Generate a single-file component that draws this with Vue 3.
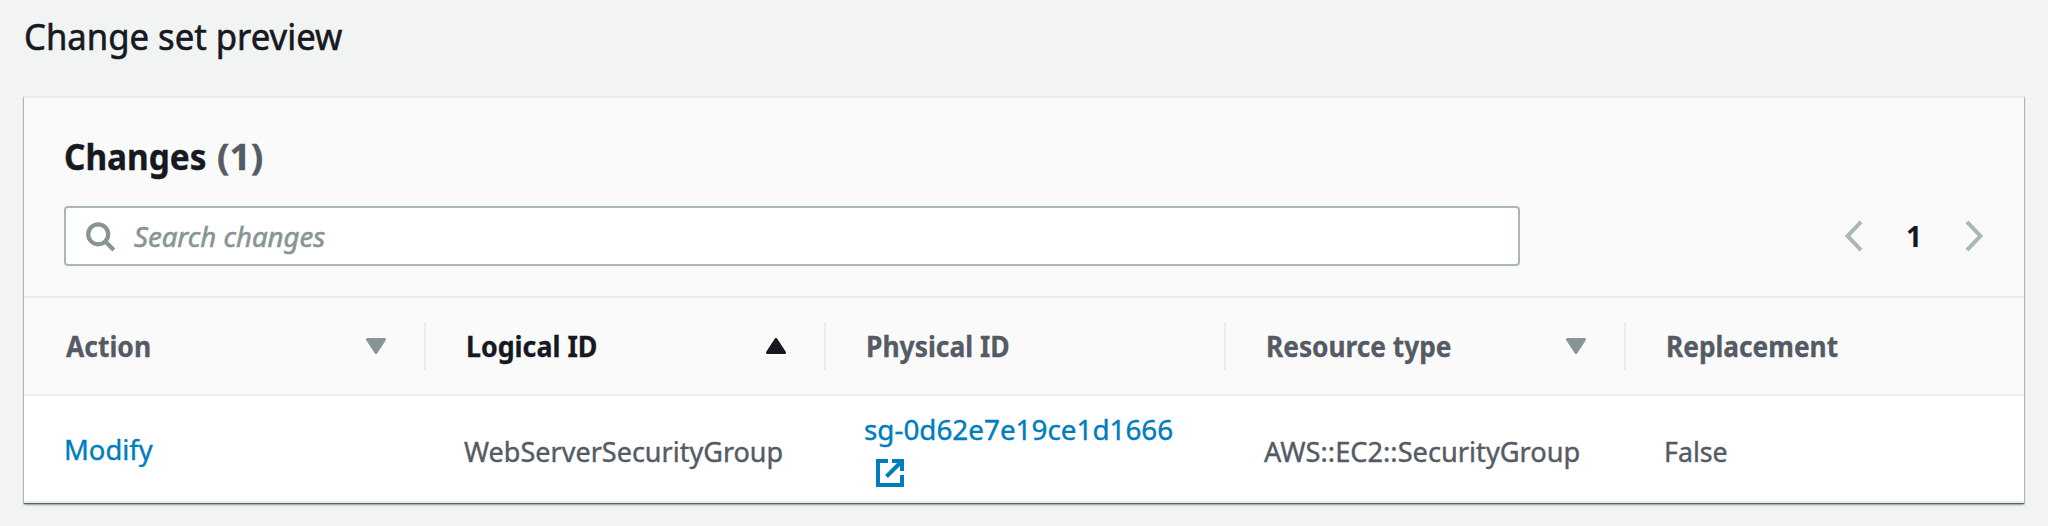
<script setup>
const columns = [
  { key: 'action', label: 'Action', sort: 'down' },
  { key: 'logical', label: 'Logical ID', sort: 'up' },
  { key: 'physical', label: 'Physical ID', sort: null },
  { key: 'type', label: 'Resource type', sort: 'down' },
  { key: 'replacement', label: 'Replacement', sort: null },
]
const changes = [
  {
    action: 'Modify',
    logical: 'WebServerSecurityGroup',
    physical: 'sg-0d62e7e19ce1d1666',
    type: 'AWS::EC2::SecurityGroup',
    replacement: 'False',
  },
]
</script>

<template>
  <main class="page">
    <h1 class="title"><span class="fit">Change set preview</span></h1>
    <section class="panel">
      <header class="panel-head">
        <h2 class="heading"><span class="fit name">Changes</span><span class="fit count">({{ changes.length }})</span></h2>
        <div class="tools">
          <div class="search">
            <svg class="search-icon" width="30" height="30" viewBox="0 0 30 30">
              <circle cx="12.2" cy="12.3" r="10" />
              <path d="M19.3 19.4 27.8 27.9" />
            </svg>
            <span class="fit placeholder">Search changes</span>
          </div>
          <nav class="pager">
            <svg class="chevron" width="20" height="32" viewBox="0 0 20 32"><path d="M17 1.8 3.5 16 17 30.2" /></svg>
            <span class="current">1</span>
            <svg class="chevron" width="20" height="32" viewBox="0 0 20 32"><path d="M3 1.8 16.5 16 3 30.2" /></svg>
          </nav>
        </div>
      </header>
      <div class="grid head-row">
        <div v-for="col in columns" :key="col.key" class="th" :class="{ active: col.sort === 'up' }">
          <span class="fit" :class="'h-' + col.key">{{ col.label }}</span>
          <svg v-if="col.sort" class="sort" :class="col.sort" width="20" height="16" viewBox="0 0 20 16">
            <path d="M1.5 1.5H18.5L10 14.5Z" />
          </svg>
        </div>
      </div>
      <div v-for="row in changes" :key="row.logical" class="grid body-row">
        <div class="td"><a class="fit link modify">{{ row.action }}</a></div>
        <div class="td"><span class="fit logical">{{ row.logical }}</span></div>
        <div class="td physical">
          <a class="fit link group-id">{{ row.physical }}</a>
          <svg class="external" width="28" height="28" viewBox="0 0 28 28">
            <path d="M12 2H2V26H26V16" />
            <path d="M16 2H26V12" />
            <path d="M25 3 10.5 17.5" />
          </svg>
        </div>
        <div class="td"><span class="fit type">{{ row.type }}</span></div>
        <div class="td"><span class="fit replacement">{{ row.replacement }}</span></div>
      </div>
    </section>
  </main>
</template>

<style>
body { background: #f2f4f4; }
</style>

<style scoped>
.page {
  box-sizing: border-box;
  height: 526px;
  padding: 13px 24px 0;
  overflow: hidden;
  font: 28px/44px "Noto Sans", "Open Sans", sans-serif;
  color: #545b64;
  background: #f2f4f4;
}
h1, h2 { margin: 0; color: #16191f; }
.fit { display: inline-block; white-space: nowrap; transform-origin: 0 50%; }
.title { height: 48px; font-size: 36px; line-height: 48px; font-weight: 400; -webkit-text-stroke: 0.6px; }
.title .fit { transform: scaleX(.963); }
.panel {
  margin-top: 35px;
  border-top: 2px solid #eaeded;
  background: #fff;
  box-shadow: 0 2px 2px 0 rgba(0, 28, 36, .35), 1px 1px 1px 0 rgba(0, 28, 36, .15), -1px 1px 1px 0 rgba(0, 28, 36, .15), 0 1px 1px 0 rgba(0, 28, 36, .3);
}
.panel-head { padding: 35px 40px 30px; background: #fafafa; }
.heading { display: flex; height: 48px; font-size: 36px; line-height: 48px; font-weight: 700; -webkit-text-stroke: 0.4px; }
.name { width: 152px; transform: scaleX(.926); }
.count { margin-left: 1px; color: #545b64; transform: scaleX(1.028); }
.tools { display: flex; justify-content: space-between; align-items: center; margin-top: 25px; }
.search {
  box-sizing: border-box;
  display: flex;
  align-items: center;
  width: 1456px;
  height: 60px;
  padding-left: 20px;
  border: 2px solid #aab7b8;
  border-radius: 4px;
  background: #fff;
}
.search-icon { margin-top: 1px; fill: none; stroke: #879596; stroke-width: 4.2; }
.placeholder { margin-left: 18px; font-style: italic; color: #879596; transform: scaleX(.985); -webkit-text-stroke: 0.6px; }
.pager { display: flex; align-items: center; }
.chevron { fill: none; stroke: #aab7b8; stroke-width: 4; }
.current { width: 100px; text-align: center; font-weight: 700; color: #16191f; }
.grid { display: grid; grid-template-columns: 402px repeat(3, 400px) 1fr; }
.head-row { height: 96px; align-items: center; border: solid #eaeded; border-width: 2px 0; background: #fafafa; }
.th {
  box-sizing: border-box;
  display: flex;
  justify-content: space-between;
  align-items: center;
  height: 48px;
  padding: 0 38px 0 40px;
  border-right: 2px solid #eaeded;
  font-weight: 700;
  -webkit-text-stroke: 0.3px;
}
.th:first-child { padding-left: 42px; }
.th:last-child { border-right: 0; }
.th.active { color: #16191f; }
.sort { fill: #879596; stroke: #879596; stroke-width: 3; stroke-linejoin: round; }
.sort.up { fill: #16191f; stroke: #16191f; transform: rotate(180deg); }
.h-action { transform: scaleX(.945); }
.h-logical { transform: scaleX(.956); }
.h-physical { transform: scaleX(.944); }
.h-type, .h-replacement { transform: scaleX(.938); }
.body-row { height: 105px; border-bottom: 2px solid #eaeded; }
.td { padding: 33px 0 0 38px; -webkit-text-stroke: 0.4px; }
.td:first-child { padding: 31px 0 0 40px; }
.td.physical { display: flex; flex-direction: column; align-items: flex-start; padding-top: 11px; }
.link { color: #007dbc; }
.modify { transform: scaleX(.978); }
.logical { transform: scaleX(.965); }
.group-id { transform: scaleX(.994); }
.type { transform: scaleX(.972); }
.replacement { transform: scaleX(.955); }
.external { margin: 8px 0 0 12px; fill: none; stroke: #007dbc; stroke-width: 4; }
</style>
